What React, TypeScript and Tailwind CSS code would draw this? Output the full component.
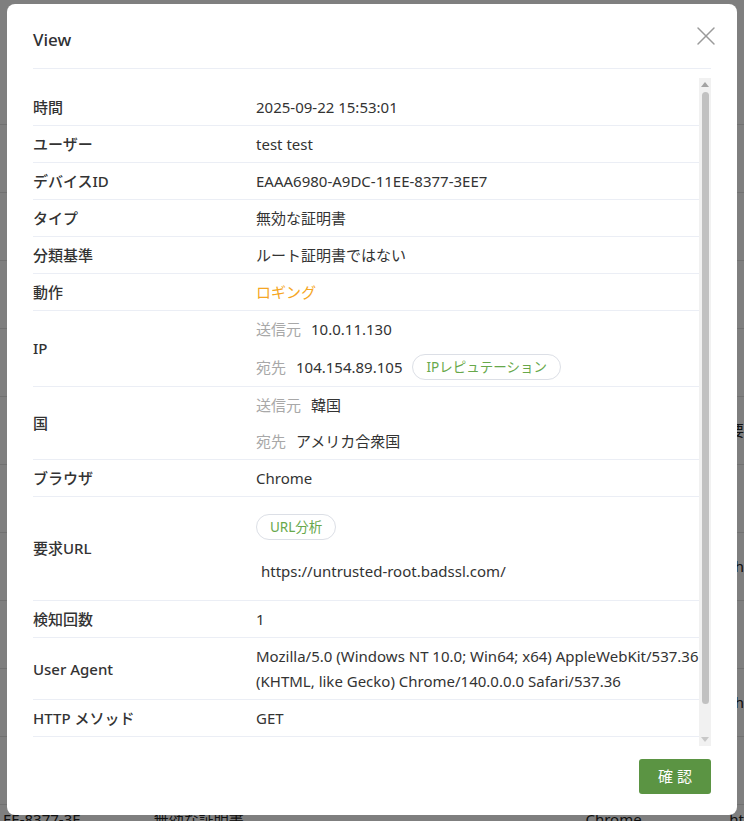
import React from "react";
import { X } from "lucide-react";

const FONT = {
  fontFamily: '"Noto Sans", "Noto Sans CJK JP", sans-serif',
};

const Pill = ({ children }: { children: React.ReactNode }) => (
  <span className="inline-flex h-[26px] items-center rounded-full border border-[#dcdfe6] px-[13px] text-[13.5px] text-[#67a84b]">
    {children}
  </span>
);

const Sub = ({ label, children }: { label: string; children: React.ReactNode }) => (
  <div className="flex items-center">
    <span className="text-[#a8a8a8]">{label}</span>
    <span className="ml-[10px]">{children}</span>
  </div>
);

const SimpleRow = ({ label, children }: { label: string; children: React.ReactNode }) => (
  <div className="flex h-[37px] items-center border-b border-[#ebeef5]">
    <div className="w-[223px] shrink-0 font-medium">{label}</div>
    <div>{children}</div>
  </div>
);

// table rows of the page sitting under the dialog
const BG_ROWS = ["", "", "", "", "", "要", "", "h", "", "h", ""];

export default function App() {
  return (
    <div className="relative h-[821px] w-[744px] overflow-hidden bg-white text-[15px] text-[#333]" style={FONT}>
      {/* page behind the dialog */}
      <div className="flex h-full flex-col pt-[57px]">
        {BG_ROWS.map((t, i) => (
          <div key={i} className="flex h-[68px] shrink-0 items-center border-b border-[#e2e2e2] text-[#222]">
            <div className="w-[738px]" />
            <div>{t}</div>
          </div>
        ))}
        <div className="mt-auto flex h-[9px] items-start overflow-visible whitespace-nowrap leading-[14px] text-[#222]">
          <div className="w-[155px] pl-[3px]">EE-8377-3E</div>
          <div className="w-[435px]">無効な証明書</div>
          <div className="w-[145px]">Chrome</div>
          <div>ht</div>
        </div>
      </div>

      {/* overlay */}
      <div className="absolute inset-0 bg-black/50 pl-[7px] pt-[4px]">
        <div className="relative flex h-[811px] w-[730px] flex-col rounded-[8px] bg-white">
          <button className="absolute right-[15px] top-[16px] text-[#9a9a9a]">
            <X className="h-[32px] w-[32px]" strokeWidth={1.1} />
          </button>

          {/* header */}
          <div className="mx-[26px] border-b border-[#ebeef5] pb-[16px] pt-[24px]">
            <div className="text-[17px] font-medium leading-[24px] text-[#303133]">View</div>
          </div>

          {/* body */}
          <div className="ml-[26px] mr-[26px] mt-[9px] flex h-[668px]">
            <div className="flex-1 overflow-hidden pt-[11px] leading-[25px]">
              <SimpleRow label="時間">2025-09-22 15:53:01</SimpleRow>
              <SimpleRow label="ユーザー">test test</SimpleRow>
              <SimpleRow label="デバイスID">EAAA6980-A9DC-11EE-8377-3EE7</SimpleRow>
              <SimpleRow label="タイプ">無効な証明書</SimpleRow>
              <SimpleRow label="分類基準">ルート証明書ではない</SimpleRow>
              <SimpleRow label="動作">
                <span className="text-[#f5a623]">ロギング</span>
              </SimpleRow>

              <div className="flex items-center border-b border-[#ebeef5]">
                <div className="w-[223px] shrink-0 font-medium">IP</div>
                <div className="flex flex-col">
                  <div className="flex h-[37px] items-center">
                    <Sub label="送信元">10.0.11.130</Sub>
                  </div>
                  <div className="flex h-[38px] items-center">
                    <Sub label="宛先">104.154.89.105</Sub>
                    <span className="ml-[10px]">
                      <Pill>IPレピュテーション</Pill>
                    </span>
                  </div>
                </div>
              </div>

              <div className="flex items-center border-b border-[#ebeef5]">
                <div className="w-[223px] shrink-0 font-medium">国</div>
                <div className="flex flex-col">
                  <div className="flex h-[36px] items-center">
                    <Sub label="送信元">韓国</Sub>
                  </div>
                  <div className="flex h-[36px] items-center">
                    <Sub label="宛先">アメリカ合衆国</Sub>
                  </div>
                </div>
              </div>

              <SimpleRow label="ブラウザ">Chrome</SimpleRow>

              <div className="flex items-center border-b border-[#ebeef5]">
                <div className="w-[223px] shrink-0 font-medium">要求URL</div>
                <div className="flex flex-col items-start pb-[16px] pt-[17px]">
                  <Pill>URL分析</Pill>
                  <div className="mt-[19px] pl-[5px]">https://untrusted-root.badssl.com/</div>
                </div>
              </div>

              <SimpleRow label="検知回数">1</SimpleRow>

              <div className="flex items-center border-b border-[#ebeef5] pb-[5px] pt-[6px]">
                <div className="w-[223px] shrink-0 font-medium">User Agent</div>
                <div className="whitespace-nowrap">
                  Mozilla/5.0 (Windows NT 10.0; Win64; x64) AppleWebKit/537.36
                  <br />
                  (KHTML, like Gecko) Chrome/140.0.0.0 Safari/537.36
                </div>
              </div>

              <SimpleRow label="HTTP メソッド">GET</SimpleRow>
            </div>

            {/* scrollbar */}
            <div className="flex w-[12px] shrink-0 flex-col items-center bg-[#f1f1f1]">
              <div className="mt-[4px] h-0 w-0 border-x-[4px] border-b-[5px] border-x-transparent border-b-[#a3a3a3]" />
              <div className="mt-[5px] h-[612px] w-[7px] rounded-full bg-[#c1c1c1]" />
              <div className="mb-[4px] mt-auto h-0 w-0 border-x-[4px] border-t-[5px] border-x-transparent border-t-[#c8c8c8]" />
            </div>
          </div>

          {/* footer */}
          <div className="mx-[26px] flex justify-end pt-[13px]">
            <button className="flex h-[35px] w-[72px] items-center justify-center rounded-[3px] bg-[#5b9443] pl-[4px] text-[15px] tracking-[4px] text-white">
              確認
            </button>
          </div>
        </div>
      </div>
    </div>
  );
}
